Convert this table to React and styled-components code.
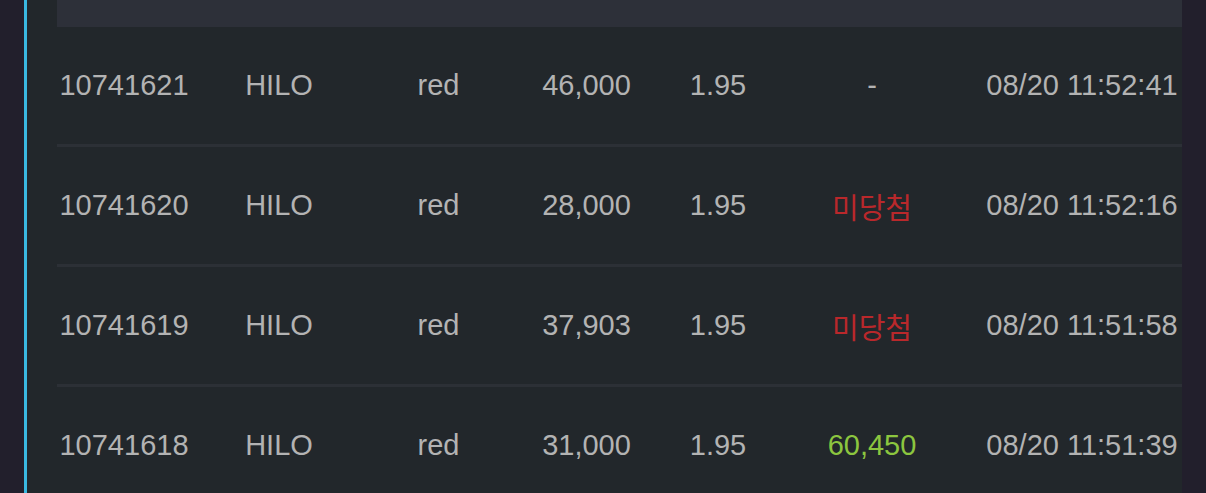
import React from "react";
import styled, { createGlobalStyle } from "styled-components";

const GlobalStyle = createGlobalStyle`
  html, body {
    margin: 0;
    padding: 0;
    background: #221f2c;
    height: 493px;
    overflow: hidden;
  }
`;

const Page = styled.div`
  display: flex;
  height: 493px;
  padding: 0 24px;
  font-family: "Liberation Sans", Arial, "Noto Sans CJK KR", sans-serif;
`;

const Panel = styled.div`
  flex: 1;
  min-width: 0;
  background: #22272b;
  border-left: 3px solid #3ab8e1;
  padding-left: 30px;
  overflow: hidden;
`;

const Table = styled.div`
  display: flex;
  flex-direction: column;
`;

const COLUMNS = "134px 176px 143px 153px 110px 198px 222px";

const HeaderRow = styled.div`
  height: 27px;
  background: #2d3039;
`;

const Row = styled.div`
  display: grid;
  grid-template-columns: ${COLUMNS};
  align-items: center;
  height: 117px;
  border-bottom: 3px solid #2c3036;
  flex-shrink: 0;
`;

const Cell = styled.div`
  text-align: center;
  white-space: nowrap;
  font-size: 29px;
  color: ${({ tone }) =>
    tone === "lose" ? "#b9282b" : tone === "win" ? "#8cc63f" : "#b3b3b3"};
  font-family: ${({ tone }) =>
    tone === "lose"
      ? '"Noto Sans CJK KR", "Liberation Sans", sans-serif'
      : '"Liberation Sans", Arial, sans-serif'};
`;

const bets = [
  { id: "10741621", game: "HILO", pick: "red", amount: "46,000", odds: "1.95", result: "-", tone: "none", time: "08/20 11:52:41" },
  { id: "10741620", game: "HILO", pick: "red", amount: "28,000", odds: "1.95", result: "미당첨", tone: "lose", time: "08/20 11:52:16" },
  { id: "10741619", game: "HILO", pick: "red", amount: "37,903", odds: "1.95", result: "미당첨", tone: "lose", time: "08/20 11:51:58" },
  { id: "10741618", game: "HILO", pick: "red", amount: "31,000", odds: "1.95", result: "60,450", tone: "win", time: "08/20 11:51:39" }
];

export default function App() {
  return (
    <>
      <GlobalStyle />
      <Page>
        <Panel>
          <Table>
            <HeaderRow />
            {bets.map(bet => (
              <Row key={bet.id}>
                <Cell>{bet.id}</Cell>
                <Cell>{bet.game}</Cell>
                <Cell>{bet.pick}</Cell>
                <Cell>{bet.amount}</Cell>
                <Cell>{bet.odds}</Cell>
                <Cell tone={bet.tone}>{bet.result}</Cell>
                <Cell>{bet.time}</Cell>
              </Row>
            ))}
          </Table>
        </Panel>
      </Page>
    </>
  );
}
